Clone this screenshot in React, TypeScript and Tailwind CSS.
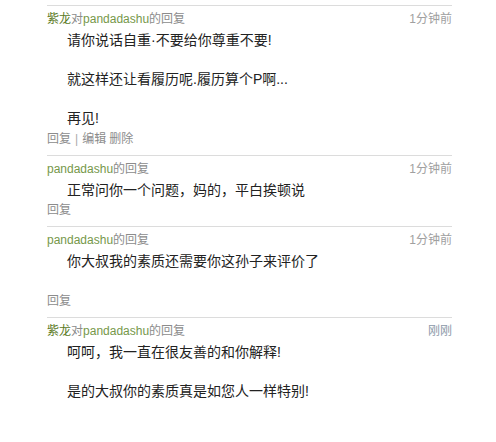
import React from 'react';

interface Reply {
    id: number;
    from?: string;
    to: string;
    time: string;
    lines: string[];
    actions: string[][];
}

const replies: Reply[] = [
    {
        id: 1,
        from: '紫龙',
        to: 'pandadashu',
        time: '1分钟前',
        lines: ['请你说话自重·不要给你尊重不要!', '', '就这样还让看履历呢.履历算个P啊...', '', '再见!'],
        actions: [['回复'], ['编辑', '删除']]
    },
    {
        id: 2,
        to: 'pandadashu',
        time: '1分钟前',
        lines: ['正常问你一个问题，妈的，平白挨顿说'],
        actions: [['回复']]
    },
    {
        id: 3,
        to: 'pandadashu',
        time: '1分钟前',
        lines: ['你大叔我的素质还需要你这孙子来评价了', ''],
        actions: [['回复']]
    },
    {
        id: 4,
        from: '紫龙',
        to: 'pandadashu',
        time: '刚刚',
        lines: ['呵呵，我一直在很友善的和你解释!', '', '是的大叔你的素质真是如您人一样特别!', '', ''],
        actions: []
    }
];

const font = { fontFamily: '"Liberation Sans", "Noto Sans CJK SC", sans-serif' };

export default function App() {
    return (
        <div className="w-[496px] h-[442px] bg-white overflow-hidden pt-[5px]" style={font}>
            <div className="ml-[47px] w-[405px]">
                {replies.map((r) => (
                    <div key={r.id} className="border-t border-[#dcdcdc] pt-[3px] mb-[6px]">
                        {/* Header */}
                        <div className="flex justify-between items-center h-[20px] text-[12px] leading-[20px]">
                            <div>
                                {r.from && (
                                    <>
                                        <span className="text-[#5a7a1e]">{r.from}</span>
                                        <span className="text-[#8c8c8c]">对</span>
                                    </>
                                )}
                                <span className="text-[#76984a]">{r.to}</span>
                                <span className="text-[#8c8c8c]">的回复</span>
                            </div>
                            <span className={r.time === '刚刚' ? 'text-[#8a98a8]' : 'text-[#a0a0a0]'}>{r.time}</span>
                        </div>

                        {/* Body */}
                        <div className="pl-[20px] pt-[2px] text-[14px] leading-[19.5px] text-[#222]">
                            {r.lines.map((l, i) => (
                                <div key={i} className="h-[19.5px] whitespace-nowrap">{l}</div>
                            ))}
                        </div>

                        {/* Actions */}
                        {r.actions.length > 0 && (
                            <div className="text-[12px] leading-[20px] text-[#8c8c8c] flex items-center">
                                {r.actions.map((group, gi) => (
                                    <React.Fragment key={gi}>
                                        {gi > 0 && <span className="mx-[4px] text-[#aaa]">|</span>}
                                        <span className="flex gap-[3px]">
                                            {group.map((a) => (
                                                <span key={a}>{a}</span>
                                            ))}
                                        </span>
                                    </React.Fragment>
                                ))}
                            </div>
                        )}
                    </div>
                ))}
            </div>
        </div>
    );
}
